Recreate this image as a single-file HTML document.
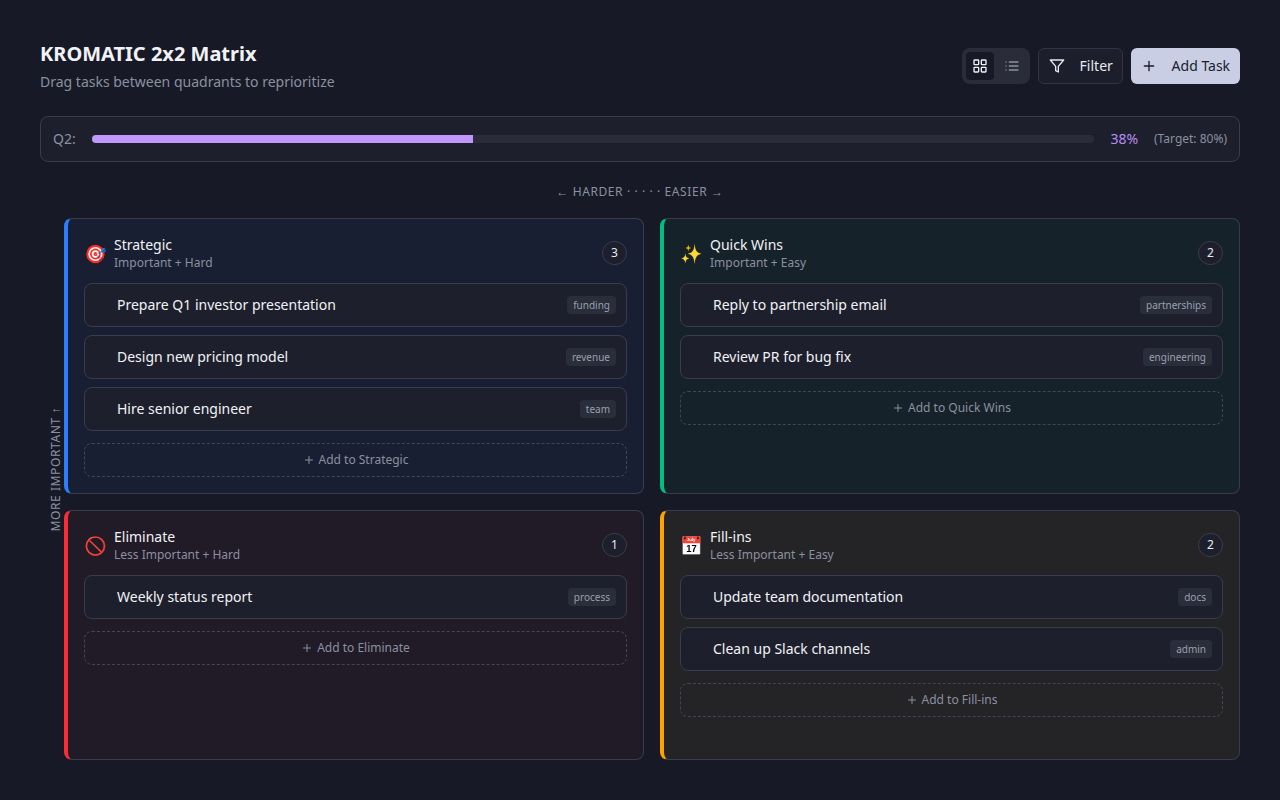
<!DOCTYPE html>
<html lang="en">
<head>
<meta charset="utf-8">
<title>KROMATIC 2x2 Matrix</title>
<style>
*{box-sizing:border-box;margin:0;padding:0}
html,body{width:1280px;height:800px;overflow:hidden}
body{background:#171a26;color:#e8eaf0;font-family:"Noto Sans","Liberation Sans","DejaVu Sans",sans-serif;font-size:14px;line-height:1.5;position:relative}
.abs{position:absolute}
h1{position:absolute;left:40px;top:40px;font-size:20px;font-weight:700;line-height:28px;color:#f1f2f6;white-space:nowrap}
.sub{position:absolute;left:40px;top:72px;font-size:14px;line-height:20px;color:#8b90a0;white-space:nowrap}
.toggle{position:absolute;left:962px;top:48px;width:68px;height:36px;border-radius:8px;background:#2a2c39;padding:4px;display:flex;gap:4px}
.toggle .tb{width:28px;height:28px;border-radius:4px;display:flex;align-items:center;justify-content:center;color:#8b90a0}
.toggle .tb.on{background:#171a26;color:#f1f2f6}
.btn{position:absolute;top:48px;height:36px;border-radius:6px;display:flex;align-items:center;white-space:nowrap;font-size:14px;line-height:20px}
.btn svg{flex:none}
.btn.filter{left:1038px;width:85px;border:1px solid #303443;background:#1c1f2b;color:#e8eaf0;padding-left:10px}
.btn.add{left:1131px;width:109px;background:#c9cee5;color:#1a1d2b;padding-left:10px}
.btn span{margin-left:14.6px}
.prog{position:absolute;left:40px;top:116px;width:1200px;height:46px;border:1px solid #393d4b;border-radius:8px;background:#1d202c}
.prog .q{position:absolute;left:12px;top:12px;font-size:14px;line-height:20px;color:#8b90a0}
.prog .track{position:absolute;left:51px;top:18px;width:1002px;height:8px;border-radius:4px;background:#2b2c39;overflow:hidden}
.prog .fill{width:38%;height:100%;background:#c197fb}
.prog .pct{position:absolute;left:1069.5px;top:12px;font-size:14px;line-height:20px;color:#b98cf2}
.prog .tgt{position:absolute;left:1113px;top:13px;font-size:12px;line-height:18px;color:#8b90a0;white-space:nowrap}
.axis{position:absolute;left:0;width:1280px;top:183px;text-align:center;font-size:12px;line-height:18px;letter-spacing:0.05em;color:#8b90a0;white-space:nowrap}
.vaxis{position:absolute;left:47px;top:400px;width:18px;height:138px;display:flex;align-items:center;justify-content:center}
.vaxis span{writing-mode:vertical-rl;transform:rotate(180deg);font-size:12px;line-height:18px;letter-spacing:0.05em;color:#8b90a0;white-space:nowrap;display:block}
.quad{position:absolute;width:580px;border:1px solid #393d4b;border-left:4px solid;border-radius:8px}
.q1{left:64px;top:218px;height:276px;background:#181f32;border-left-color:#2b7fff}
.q2{left:660px;top:218px;height:276px;background:#15222a;border-left-color:#00bf80}
.q3{left:64px;top:510px;height:250px;background:#211a27;border-left-color:#fb2c36}
.q4{left:660px;top:510px;height:250px;background:#242427;border-left-color:#ffa200}
.quad .ico{position:absolute;left:16px;top:22px;width:22.5px;height:25.2px;will-change:transform}
.quad .ico text{text-rendering:geometricPrecision}
.quad .ttl{position:absolute;left:46px;top:16px;font-size:14px;line-height:20px;color:#f1f2f6;white-space:nowrap}
.quad .desc{position:absolute;left:46px;top:35px;font-size:12px;line-height:18px;color:#8b90a0;white-space:nowrap}
.quad .cnt{position:absolute;left:534px;top:22px;width:25px;height:24px;border:1px solid #393d4b;border-radius:12px;background:#1d202c;font-size:12px;line-height:22px;text-align:center;color:#e8eaf0}
.task{position:absolute;left:16px;width:543px;height:44px;border:1px solid #393d4b;border-radius:8px;background:#1d202c}
.task .t{position:absolute;left:32px;top:11px;font-size:14px;line-height:20px;color:#f1f2f6;white-space:nowrap}
.task .tag{position:absolute;right:10px;top:12px;height:18px;padding:0 6px;border-radius:4px;background:#2a2d3a;font-size:10px;line-height:18px;color:#9a9fae;white-space:nowrap}
.addq{position:absolute;left:16px;width:543px;height:34px;border:1px dashed #41455a;border-radius:8px;font-size:12px;line-height:16px;color:#8b90a0;white-space:nowrap;display:flex;align-items:center;justify-content:center;gap:4px}
.addq svg{flex:none}
</style>
</head>
<body>
<h1>KROMATIC 2x2 Matrix</h1>
<div class="sub">Drag tasks between quadrants to reprioritize</div>

<div class="toggle">
  <div class="tb on"><svg width="16" height="16" viewBox="0 0 24 24" fill="none" stroke="currentColor" stroke-width="2" stroke-linecap="round" stroke-linejoin="round"><rect x="3" y="3" width="7" height="7" rx="1"/><rect x="14" y="3" width="7" height="7" rx="1"/><rect x="14" y="14" width="7" height="7" rx="1"/><rect x="3" y="14" width="7" height="7" rx="1"/></svg></div>
  <div class="tb"><svg width="16" height="16" viewBox="0 0 24 24" fill="none" stroke="currentColor" stroke-width="2" stroke-linecap="round" stroke-linejoin="round"><path d="M8 6h13M8 12h13M8 18h13M3 6h.01M3 12h.01M3 18h.01"/></svg></div>
</div>
<div class="btn filter"><svg width="16" height="16" viewBox="0 0 24 24" fill="none" stroke="currentColor" stroke-width="2" stroke-linecap="round" stroke-linejoin="round"><polygon points="22 3 2 3 10 12.46 10 19 14 21 14 12.46 22 3"/></svg><span>Filter</span></div>
<div class="btn add"><svg width="16" height="16" viewBox="0 0 24 24" fill="none" stroke="currentColor" stroke-width="2" stroke-linecap="round" stroke-linejoin="round"><path d="M5 12h14M12 5v14"/></svg><span>Add Task</span></div>

<div class="prog">
  <div class="q">Q2:</div>
  <div class="track"><div class="fill"></div></div>
  <div class="pct">38%</div>
  <div class="tgt">(Target: 80%)</div>
</div>

<div class="axis">← HARDER · · · · · EASIER →</div>
<div class="vaxis"><span>MORE IMPORTANT ↑</span></div>

<div class="quad q1">
  <svg class="ico" viewBox="-2 -3 200 224" aria-hidden="true"><circle cx="99.5" cy="112.5" r="81.6" fill="#ff2a23"/><circle cx="99.5" cy="112.5" r="63" fill="#fffafa"/><circle cx="99.5" cy="112.5" r="48" fill="#ff2a23"/><circle cx="99.5" cy="112.5" r="32.5" fill="#fffafa"/><circle cx="99.5" cy="112.5" r="17" fill="#ff2a23"/><path d="M99.5 115 L174 149 A81.6 81.6 0 0 1 143 181.5 Z" fill="#30103a" fill-opacity="0.3"/><path d="M100 115 L131 101" stroke="#a4adb3" stroke-width="7" stroke-linecap="round"/><path d="M130 102 L152 92" stroke="#0f6cb3" stroke-width="8" stroke-linecap="round"/><path d="M148 91 C150 76 160 60 178 58 C185 58 185 64 182 70 L152 95 Z" fill="#2b7bd9"/><path d="M150 96 L188 73 C194 80 193 92 186 98 C176 101 160 99 150 96 Z" fill="#0f6cb3"/><path d="M150 95 L191 71" stroke="#0f6cb3" stroke-width="5" stroke-linecap="round"/></svg>
  <div class="ttl">Strategic</div><div class="desc">Important + Hard</div><div class="cnt">3</div>
  <div class="task" style="top:64px"><div class="t">Prepare Q1 investor presentation</div><div class="tag">funding</div></div>
  <div class="task" style="top:116px"><div class="t">Design new pricing model</div><div class="tag">revenue</div></div>
  <div class="task" style="top:168px"><div class="t">Hire senior engineer</div><div class="tag">team</div></div>
  <div class="addq" style="top:224px"><svg width="12" height="12" viewBox="0 0 24 24" fill="none" stroke="currentColor" stroke-width="2" stroke-linecap="round" stroke-linejoin="round"><path d="M5 12h14M12 5v14"/></svg><span>Add to Strategic</span></div>
</div>

<div class="quad q2">
  <svg class="ico" viewBox="-2 -3 200 224" aria-hidden="true"><path d="M128 28 C133 82 146 101 186 111 C146 121 133 142 128 196 C123 142 110 121 69 111 C110 101 123 82 128 28Z" fill="#fdd835" stroke="#fdd835" stroke-width="1.5" stroke-linejoin="round"/><path d="M186 111 C146 121 133 142 128 196 C130 150 136 128 186 111Z" fill="#f4b400"/><path d="M72 31 C74 50 79 56 95 60 C79 64 74 70 72 88 C70 70 65 64 49 60 C65 56 70 50 72 31Z" fill="#f4b400" stroke="#f4b400" stroke-width="1.5" stroke-linejoin="round"/><path d="M45 111 C48 138 55 146 79 152 C55 158 48 166 45 192 C42 166 35 158 12 152 C35 146 42 138 45 111Z" fill="#fdd835" stroke="#fdd835" stroke-width="1.5" stroke-linejoin="round"/></svg>
  <div class="ttl">Quick Wins</div><div class="desc">Important + Easy</div><div class="cnt">2</div>
  <div class="task" style="top:64px"><div class="t">Reply to partnership email</div><div class="tag">partnerships</div></div>
  <div class="task" style="top:116px"><div class="t">Review PR for bug fix</div><div class="tag">engineering</div></div>
  <div class="addq" style="top:172px"><svg width="12" height="12" viewBox="0 0 24 24" fill="none" stroke="currentColor" stroke-width="2" stroke-linecap="round" stroke-linejoin="round"><path d="M5 12h14M12 5v14"/></svg><span>Add to Quick Wins</span></div>
</div>

<div class="quad q3">
  <svg class="ico" viewBox="-2 -3 200 224" aria-hidden="true"><circle cx="99.4" cy="113" r="80.4" fill="none" stroke="#f44336" stroke-width="15.4"/><path d="M159.5 52.9 A85 85 0 0 1 56.9 186.600" fill="none" stroke="#d32f2f" stroke-width="6"/><path d="M47.5 64 L150.5 165" stroke="#f44336" stroke-width="14"/><path d="M40 50 C52 38 66 34 80 35" stroke="#ff8a80" stroke-width="4" fill="none" stroke-linecap="round"/></svg>
  <div class="ttl">Eliminate</div><div class="desc">Less Important + Hard</div><div class="cnt">1</div>
  <div class="task" style="top:64px"><div class="t">Weekly status report</div><div class="tag">process</div></div>
  <div class="addq" style="top:120px"><svg width="12" height="12" viewBox="0 0 24 24" fill="none" stroke="currentColor" stroke-width="2" stroke-linecap="round" stroke-linejoin="round"><path d="M5 12h14M12 5v14"/></svg><span>Add to Eliminate</span></div>
</div>

<div class="quad q4">
  <svg class="ico" viewBox="-2 -3 200 224" aria-hidden="true"><rect x="20.5" y="25" width="158" height="163" rx="7" fill="#bdbdbd"/><rect x="24.5" y="60" width="150" height="123" rx="3" fill="#fafafa"/><path d="M20.5 88 V32 a7 7 0 0 1 7-7 H171.5 a7 7 0 0 1 7 7 V88Z" fill="#f44336"/><circle cx="42" cy="43.5" r="9" fill="#242427"/><rect x="39" y="24" width="6" height="18" fill="#242427"/><circle cx="157.5" cy="43.5" r="9" fill="#242427"/><rect x="154.500" y="24" width="6" height="18" fill="#242427"/><text x="96.500" y="70.500" text-anchor="middle" font-family="Liberation Sans, Arial, sans-serif" font-weight="700" font-size="39" textLength="77" lengthAdjust="spacingAndGlyphs" fill="#ffffff">July</text><text x="99.500" y="169" text-anchor="middle" font-family="Liberation Sans, Arial, sans-serif" font-weight="700" font-size="92" textLength="92" lengthAdjust="spacingAndGlyphs" fill="#000000">17</text></svg>
  <div class="ttl">Fill-ins</div><div class="desc">Less Important + Easy</div><div class="cnt">2</div>
  <div class="task" style="top:64px"><div class="t">Update team documentation</div><div class="tag">docs</div></div>
  <div class="task" style="top:116px"><div class="t">Clean up Slack channels</div><div class="tag">admin</div></div>
  <div class="addq" style="top:172px"><svg width="12" height="12" viewBox="0 0 24 24" fill="none" stroke="currentColor" stroke-width="2" stroke-linecap="round" stroke-linejoin="round"><path d="M5 12h14M12 5v14"/></svg><span>Add to Fill-ins</span></div>
</div>
</body>
</html>
